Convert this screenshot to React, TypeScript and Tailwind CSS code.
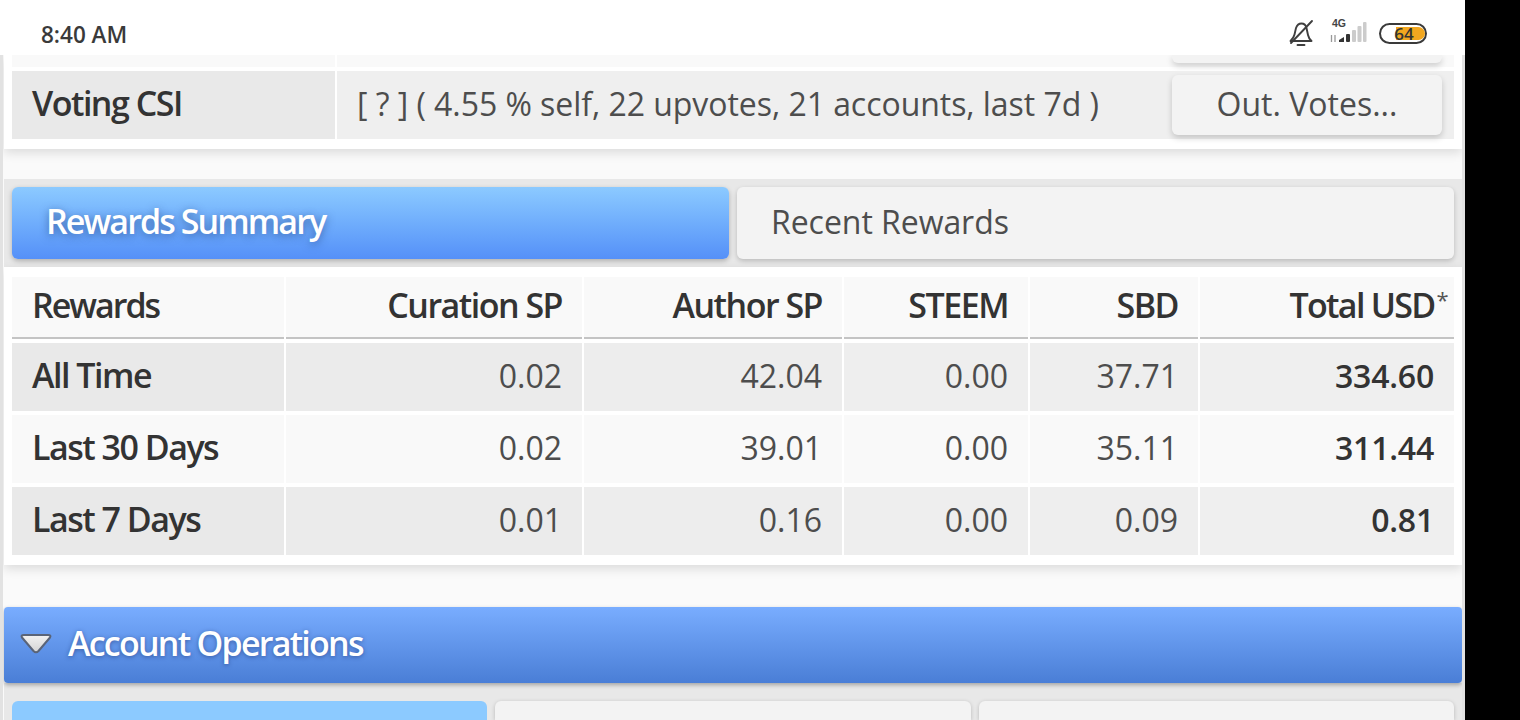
const columns = 'grid grid-cols-[272px_296px_258px_184px_168px_254px] gap-x-[2px]';
const labelText = 'text-[34px] font-semibold tracking-[-1.500px]';

// shaded rows get slightly lighter going right
const shades = ['bg-[#ebebeb]', 'bg-[#ededed]', 'bg-[#eeeeee]', 'bg-[#eeeeee]'];

const rows = [
  { name: 'All Time', values: ['0.02', '42.04', '0.00', '37.71'], total: '334.60', shaded: true },
  { name: 'Last 30 Days', values: ['0.02', '39.01', '0.00', '35.11'], total: '311.44', shaded: false },
  { name: 'Last 7 Days', values: ['0.01', '0.16', '0.00', '0.09'], total: '0.81', shaded: true },
];

function StatusBar() {
  return (
    <div className="h-[55px] shrink-0 bg-white flex items-start justify-between pl-[41px] pr-[38px] pt-[19px] relative z-10">
      <span className="text-[22.500px] leading-[31px] font-semibold text-[#3a3a3a]">8:40 AM</span>
      <div className="flex items-center">
        <svg width="26" height="28" viewBox="0 0 26 28" fill="none" stroke="#3f3f3f" strokeWidth="1.900" strokeLinecap="round" strokeLinejoin="round">
          <path d="M1.500 22h21c-2-2-3-3.500-3.500-6l-1.500-7c-.7-3-2.500-4.500-5-4.500S8 6 7 9L5.500 15.500C5 18 3.500 20 1.500 22z" />
          <path d="M8.500 26h7" />
          <path d="M23 2 2 24" />
        </svg>
        <div className="ml-[14px] w-[38px] h-[26px] relative">
          <span className="absolute left-[3px] top-[-4px] text-[10.500px] font-semibold text-[#444] font-['Liberation_Sans',sans-serif]">4G</span>
          <svg width="38" height="26" viewBox="0 0 38 26">
            <path d="M2.500 15v7M6 15v7" stroke="#999" strokeWidth="1.300" />
            <path d="M10 22v-2l5-3v5z" fill="#333" />
            <rect x="17" y="14" width="4" height="8" rx="1" fill="#333" />
            <rect x="23" y="10" width="4" height="12" rx="1" fill="#ccc" />
            <rect x="28.500" y="6" width="4" height="16" rx="1" fill="#ccc" />
            <rect x="34" y="2" width="3.500" height="20" rx="1" fill="#ccc" />
          </svg>
        </div>
        <div className="ml-[12px] w-[48px] h-[21px] rounded-full border-2 border-[#3a3a3a] p-[2px] relative">
          <div className="ml-[13px] w-[29px] h-full rounded-r-full rounded-l-[3px] bg-[#f2a71f]" />
          <span className="absolute inset-0 flex items-center justify-center pl-[2px] text-[17px] leading-none font-semibold text-[#333]">64</span>
        </div>
      </div>
    </div>
  );
}

function VotingCard() {
  return (
    <div className="bg-white h-[94px] shrink-0 shadow-[0_4px_10px_rgba(0,0,0,0.12)] relative px-[8px]">
      <div className="flex gap-x-[2px] h-[12px] mb-[4px]">
        <div className="w-[323px] bg-[#f9f9f9]" />
        <div className="flex-1 bg-[#f9f9f9] pr-[12px] flex justify-end">
          <div className="w-[270px] h-[8px] bg-[#f3f3f3] rounded-b-[6px] shadow-[0_3px_6px_rgba(0,0,0,0.18)]" />
        </div>
      </div>
      <div className="flex gap-x-[2px] h-[68px]">
        <div className={`w-[323px] bg-[#e9e9e9] flex items-center pl-[20px] pb-[4px] text-[#333] ${labelText}`}>
          Voting CSI
        </div>
        <div className="flex-1 bg-[#efefef] flex items-center justify-between pl-[20px] pr-[12px]">
          <span className="text-[32px] tracking-[-0.050px] pb-[3px] text-[#4d4d4d]">[ ? ] ( 4.55 % self, 22 upvotes, 21 accounts, last 7d )</span>
          <div className="w-[270px] h-[60px] pb-[3px] rounded-[6px] bg-[#f3f3f3] shadow-[0_3px_6px_rgba(0,0,0,0.18)] flex items-center justify-center text-[32px] text-[#4d4d4d]">
            Out. Votes...
          </div>
        </div>
      </div>
    </div>
  );
}

function RewardsTabs() {
  return (
    <div className="h-[88px] shrink-0 bg-[#e8e8e8] p-[8px] grid grid-cols-2 gap-x-[8px]">
      <div className="h-[72px] rounded-[6px] bg-gradient-to-b from-[#8ccaff] to-[#5590f8] shadow-[0_2px_5px_rgba(0,0,0,0.25)] flex items-center pl-[34px] pb-[4px] text-white [text-shadow:0_2px_8px_rgba(30,60,120,0.6)] text-[34px] font-semibold tracking-[-1.900px]">
        Rewards Summary
      </div>
      <div className="h-[72px] rounded-[6px] bg-[#f3f3f3] shadow-[0_2px_5px_rgba(0,0,0,0.2)] flex items-center pl-[34px] pb-[3px] text-[32px] tracking-[-0.050px] text-[#4d4d4d]">
        Recent Rewards
      </div>
    </div>
  );
}

function RewardsTable() {
  return (
    <div className="bg-white h-[298px] shrink-0 px-[8px] pt-[10px] shadow-[0_4px_10px_rgba(0,0,0,0.12)] relative">
      <div className={`${columns} h-[62px] text-[#333] ${labelText}`}>
        <div className="bg-[#f9f9f9] border-b-2 border-[#c4c4c4] flex items-center pl-[20px] pb-[4px] tracking-[-2px]">Rewards</div>
        {['Curation SP', 'Author SP', 'STEEM', 'SBD'].map((h) => (
          <div key={h} className="bg-[#f9f9f9] border-b-2 border-[#c4c4c4] flex items-center justify-end pr-[20px] pb-[4px]">
            {h}
          </div>
        ))}
        <div className="bg-[#f9f9f9] border-b-2 border-[#c4c4c4] flex items-center justify-end pr-[7px] pb-[4px] tracking-[-1.700px]">
          Total USD<span className="ml-[2px] text-[22px] font-normal self-start mt-[6px] text-[#555]">*</span>
        </div>
      </div>
      <div className="flex flex-col gap-y-[4px] mt-[4px]">
        {rows.map((r) => (
          <div key={r.name} className={`${columns} h-[68px]`}>
            <div className={`${r.shaded ? 'bg-[#e9e9e9]' : 'bg-[#f9f9f9]'} flex items-center pl-[20px] pb-[4px] text-[#333] ${labelText}`}>
              {r.name}
            </div>
            {r.values.map((v, i) => (
              <div key={i} className={`${r.shaded ? shades[i] : 'bg-[#f9f9f9]'} flex items-center justify-end pr-[20px] pb-[3px] text-[32px] text-[#4d4d4d]`}>
                {v}
              </div>
            ))}
            <div className={`${r.shaded ? 'bg-[#efefef]' : 'bg-[#f9f9f9]'} flex items-center justify-end pr-[20px] pb-[3px] text-[32px] font-semibold tracking-[-0.200px] text-[#333]`}>
              {r.total}
            </div>
          </div>
        ))}
      </div>
    </div>
  );
}

function AccountOperations() {
  return (
    <div className="h-[76px] shrink-0 rounded-[4px] bg-gradient-to-b from-[#79adff] to-[#4a7ed6] shadow-[0_2px_4px_rgba(0,0,0,0.3)] flex items-center pl-[15px] pb-[2px] relative">
      <svg width="34" height="24" viewBox="0 0 34 24">
        <defs>
          <linearGradient id="arrow" x1="0" y1="0" x2="0" y2="1">
            <stop offset="0" stopColor="#f2f2f2" />
            <stop offset="1" stopColor="#d4d4d4" />
          </linearGradient>
        </defs>
        <path d="M5 3h24q3.500 0 2 2.500L19.500 19q-2.500 2.500-5 0L3 5.500Q1.500 3 5 3z" fill="url(#arrow)" stroke="#5a6478" strokeWidth="2" strokeLinejoin="round" />
      </svg>
      <span className="ml-[15px] pb-[2px] text-white [text-shadow:0_1px_4px_rgba(20,40,100,0.5)] text-[34px] font-semibold tracking-[-1.750px]">
        Account Operations
      </span>
    </div>
  );
}

function OperationTabs() {
  return (
    <div className="flex-1 bg-[#e8e8e8] pt-[18px] px-[8px] flex gap-x-[8px]">
      <div className="flex-1 rounded-t-[6px] bg-[#8ccaff]" />
      <div className="flex-1 rounded-t-[6px] bg-[#f3f3f3] shadow-[0_1px_4px_rgba(0,0,0,0.2)]" />
      <div className="flex-1 rounded-t-[6px] bg-[#f3f3f3] shadow-[0_1px_4px_rgba(0,0,0,0.2)]" />
    </div>
  );
}

export default function App() {
  return (
    <div className="w-[1520px] h-[720px] overflow-hidden bg-black flex font-['Open_Sans',sans-serif]">
      <div className="w-[1465px] h-full flex flex-col bg-[#fafafa]">
        <StatusBar />
        <div className="flex-1 flex flex-col border-x-[3px] border-[#e2e2e2] pl-[1px] overflow-hidden">
          <VotingCard />
          <div className="h-[30px] shrink-0" />
          <RewardsTabs />
          <RewardsTable />
          <div className="h-[42px] shrink-0" />
          <AccountOperations />
          <OperationTabs />
        </div>
      </div>
    </div>
  );
}
